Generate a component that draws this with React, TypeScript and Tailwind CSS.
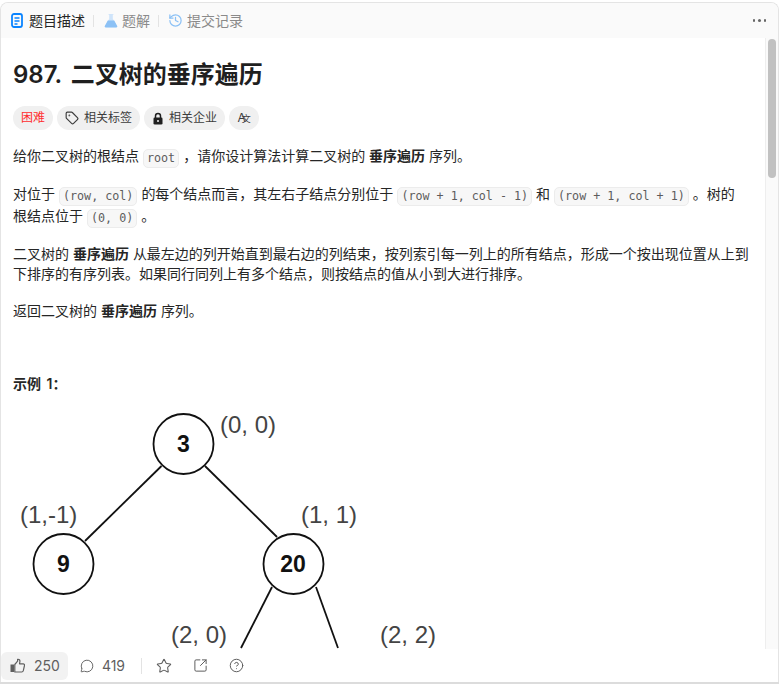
import React from "react";
import { History, Tag, MessageCircle, Star, CircleHelp, SquareArrowOutUpRight } from "lucide-react";

const Code = ({ children }: { children: React.ReactNode }) => (
  <code className="mx-[4px] inline-block rounded-[5px] border border-[#ececec] bg-[#f7f7f7] px-[3px] align-[-1px] font-['DejaVu_Sans_Mono',monospace] text-[11.7px] leading-[17px] text-[#5c5c5c]">
    {children}
  </code>
);

const Chip = ({ children, className = "" }: { children: React.ReactNode; className?: string }) => (
  <div className={`flex h-6 items-center rounded-full bg-[#f0f0f0] text-[12px] text-[#3c3c3c] ${className}`}>{children}</div>
);

const Tree = () => (
  <svg width="450" height="250" viewBox="0 0 450 250" className="block" fontFamily="'Liberation Sans', sans-serif">
    <g stroke="#111" strokeWidth="1.8" fill="none">
      <circle cx="183.500" cy="44" r="30" />
      <circle cx="63.500" cy="164" r="30" />
      <circle cx="293.500" cy="164" r="30" />
      <line x1="161.500" y1="66" x2="85" y2="141" />
      <line x1="205" y1="66" x2="277" y2="137" />
      <line x1="272" y1="187" x2="241" y2="248" />
      <line x1="316" y1="187" x2="338" y2="248" />
    </g>
    <g fill="#111" fontWeight="700" fontSize="23" textAnchor="middle">
      <text x="183.500" y="52">3</text>
      <text x="63.500" y="172">9</text>
      <text x="293" y="172">20</text>
    </g>
    <g fill="#444" fontSize="24">
      <text x="220" y="33">(0, 0)</text>
      <text x="20" y="123">(1,-1)</text>
      <text x="301" y="123">(1, 1)</text>
      <text x="171" y="243">(2, 0)</text>
      <text x="380" y="243">(2, 2)</text>
    </g>
  </svg>
);

const DocIcon = () => (
  <svg width="12" height="15" viewBox="0 0 12 15" fill="none" stroke="#0a84ff">
    <rect x="1" y="1" width="10" height="13" rx="2" strokeWidth="1.800" />
    <path d="M3.500 5h5M3.500 8h5M3.500 11h3" strokeWidth="1.300" />
  </svg>
);

const FlaskIcon = () => (
  <svg width="14" height="15" viewBox="0 0 14 15">
    <path d="M4.500 1h5v.8h-.7v4l4 7a1 1 0 0 1-.9 1.500H2.100a1 1 0 0 1-.9-1.500l4-7v-4h-.7z" fill="#cfe4fa" />
    <path d="M3.800 7.500h6.400l3 5.500a1 1 0 0 1-.9 1.500H1.700a1 1 0 0 1-.9-1.500z" fill="#8cc1f5" />
  </svg>
);

const LockIcon = () => (
  <svg width="12" height="13" viewBox="0 0 12 13">
    <path d="M3.500 6V4a2.500 2.500 0 0 1 5 0v2" fill="none" stroke="#1f1f1f" strokeWidth="1.500" />
    <rect x="1.500" y="5.500" width="9" height="7" rx="1.300" fill="#1f1f1f" />
    <circle cx="6" cy="9" r="1" fill="#f0f0f0" />
  </svg>
);

const ThumbIcon = () => (
  <svg width="15" height="15" viewBox="0 0 15 15" fill="none" stroke="#5f5f5f" strokeWidth="1.200" strokeLinejoin="round">
    <rect x="0.500" y="6.500" width="3.500" height="7.500" fill="#5f5f5f" stroke="none" />
    <path d="M4.800 6.500 7.600 3.200V1.300c1.500-.3 2.500.8 2.300 2.200L9.500 5.800h3.700c.9 0 1.500.8 1.300 1.600l-1.200 5.300c-.2.800-.8 1.300-1.600 1.300H4.800z" />
  </svg>
);

export default function App() {
  return (
    <div className="h-[684px] w-[781px] overflow-hidden bg-white pt-[2px] font-['Inter','Noto_Sans_CJK_SC',sans-serif] text-[14px] text-[#262626]">
      <div className="flex h-[680px] w-[779px] flex-col overflow-hidden rounded-t-[8px] border border-b-0 border-[#e4e4e4] bg-white">
        <div className="flex h-[35px] shrink-0 items-center bg-[#fafafa] pl-[10px] pr-[10px]">
          <DocIcon />
          <span className="ml-[6px] text-[14px] text-[#262626]">题目描述</span>
          <div className="ml-[8px] mr-[10px] h-[12px] w-px bg-[#e3e3e3]" />
          <FlaskIcon />
          <span className="ml-[4px] text-[14px] text-[#8a8a8a]">题解</span>
          <div className="ml-[8px] mr-[9px] h-[12px] w-px bg-[#e3e3e3]" />
          <History size={15} className="text-[#8cc1f5]" />
          <span className="ml-[4px] text-[14px] text-[#8a8a8a]">提交记录</span>
          <div className="ml-auto mr-[2px] flex gap-[3px]">
            <i className="h-[2.500px] w-[2.500px] rounded-full bg-[#666]" />
            <i className="h-[2.500px] w-[2.500px] rounded-full bg-[#666]" />
            <i className="h-[2.500px] w-[2.500px] rounded-full bg-[#666]" />
          </div>
        </div>
        <div className="flex min-h-0 flex-1">
          <div className="min-w-0 flex-1 overflow-hidden pl-[12px]">
            <h1 className="mt-[19px] text-[24px] font-semibold leading-[36px] text-[#1f1f1f] [word-spacing:3px]">987. 二叉树的垂序遍历</h1>
            <div className="mt-[13px] flex gap-[4px]">
              <Chip className="px-2 text-[#ff2d2d]">困难</Chip>
              <Chip className="gap-[5px] pl-2 pr-2"><Tag size={14} />相关标签</Chip>
              <Chip className="gap-[5px] pl-2 pr-2"><LockIcon />相关企业</Chip>
              <Chip className="w-[30px] justify-center"><span className="text-[12px]">A</span><span className="-ml-[4px] mt-[2px] text-[9px]">文</span></Chip>
            </div>
            <div className="mt-[16px] w-[740px] leading-[20px]">
              <p>给你二叉树的根结点<Code>root</Code>，请你设计算法计算二叉树的 <b className="font-semibold">垂序遍历</b> 序列。</p>
              <p className="mt-[16px]">对位于<Code>(row, col)</Code>的每个结点而言，其左右子结点分别位于<Code>(row + 1, col - 1)</Code>和<Code>(row + 1, col + 1)</Code>。树的<br />根结点位于<Code>(0, 0)</Code>。</p>
              <p className="mt-[16px]">二叉树的 <b className="font-semibold">垂序遍历</b> 从最左边的列开始直到最右边的列结束，按列索引每一列上的所有结点，形成一个按出现位置从上到下排序的有序列表。如果同行同列上有多个结点，则按结点的值从小到大进行排序。</p>
              <p className="mt-[17px]">返回二叉树的 <b className="font-semibold">垂序遍历</b> 序列。</p>
              <p className="mt-[53px] font-semibold [word-spacing:2px]">示例 1：</p>
            </div>
            <div className="-ml-[13px] mt-[6px]"><Tree /></div>
          </div>
          <div className="w-[13px] shrink-0 border-l border-[#eeeeee] bg-[#fafafa] pt-[1px] pl-[2px]">
            <div className="h-[139px] w-[8px] rounded-full bg-[#c1c1c1]" />
          </div>
        </div>
        <div className="flex h-[33px] shrink-0 items-center bg-white text-[14px] text-[#5f5f5f]">
          <div className="flex h-[28px] items-center gap-[9px] rounded-[6px] bg-[#f2f2f2] pl-[9px] pr-[8px]">
            <ThumbIcon />
            <span>250</span>
          </div>
          <MessageCircle size={14} className="ml-[12px]" strokeWidth={1.600} />
          <span className="ml-[8px]">419</span>
          <div className="ml-[16px] mr-[14px] h-[16px] w-px bg-[#e3e3e3]" />
          <Star size={16} strokeWidth={1.600} />
          <SquareArrowOutUpRight size={15} className="ml-[21px]" strokeWidth={1.600} />
          <CircleHelp size={15} className="ml-[21px]" strokeWidth={1.600} />
        </div>
      </div>
      <div className="h-[2px] w-[779px] bg-[#dcdcdc]" />
    </div>
  );
}
